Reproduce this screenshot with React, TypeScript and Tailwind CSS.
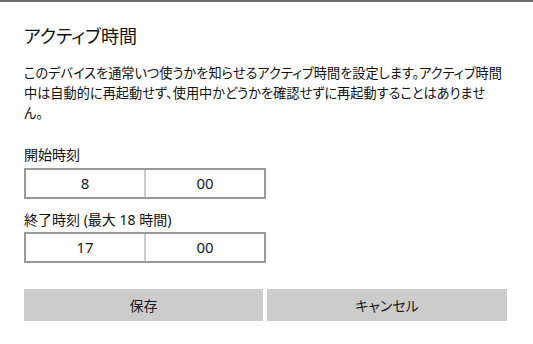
export default function App() {
  const font = '[font-family:"Noto_Sans","Noto_Sans_CJK_JP",sans-serif] [font-feature-settings:"palt"]';

  const TimeBox = ({ hour, minute }: { hour: string; minute: string }) => (
    <div className="flex w-[242px] h-[31px] border-2 border-[#999999] bg-white">
      <div className="flex-1 flex items-center justify-center border-r-2 border-[#cccccc] text-[15px] text-[#1a1a1a]">
        {hour}
      </div>
      <div className="flex-1 flex items-center justify-center text-[15px] text-[#1a1a1a]">{minute}</div>
    </div>
  );

  return (
    <div className={`w-[533px] h-[344px] bg-white border-t-2 border-[#6e6e6e] overflow-hidden ${font}`}>
      <div className="pl-[24px] pt-[20px]">
        <h1 className="text-[18px] leading-[28px] text-[#111111]">アクティブ時間</h1>

        <div className="mt-[13px] text-[13.2px] leading-[20px] text-[#111111]">
          <div className="whitespace-nowrap">このデバイスを通常いつ使うかを知らせるアクティブ時間を設定します。アクティブ時間</div>
          <div className="whitespace-nowrap">中は自動的に再起動せず、使用中かどうかを確認せずに再起動することはありませ</div>
          <div className="whitespace-nowrap">ん。</div>
        </div>

        <div className="mt-[22px] text-[14px] leading-[20px] text-[#111111]">開始時刻</div>
        <div className="mt-[3px]">
          <TimeBox hour="8" minute="00" />
        </div>

        <div className="mt-[11px] text-[14px] leading-[20px] text-[#111111]">終了時刻 (最大 18 時間)</div>
        <div className="mt-[2px]">
          <TimeBox hour="17" minute="00" />
        </div>

        <div className="mt-[26px] flex gap-[4px]">
          <button className="w-[239px] h-[32px] bg-[#cccccc] text-[14px] text-[#1a1a1a]">保存</button>
          <button className="w-[240px] h-[32px] bg-[#cccccc] text-[14px] text-[#1a1a1a]">キャンセル</button>
        </div>
      </div>
    </div>
  );
}
